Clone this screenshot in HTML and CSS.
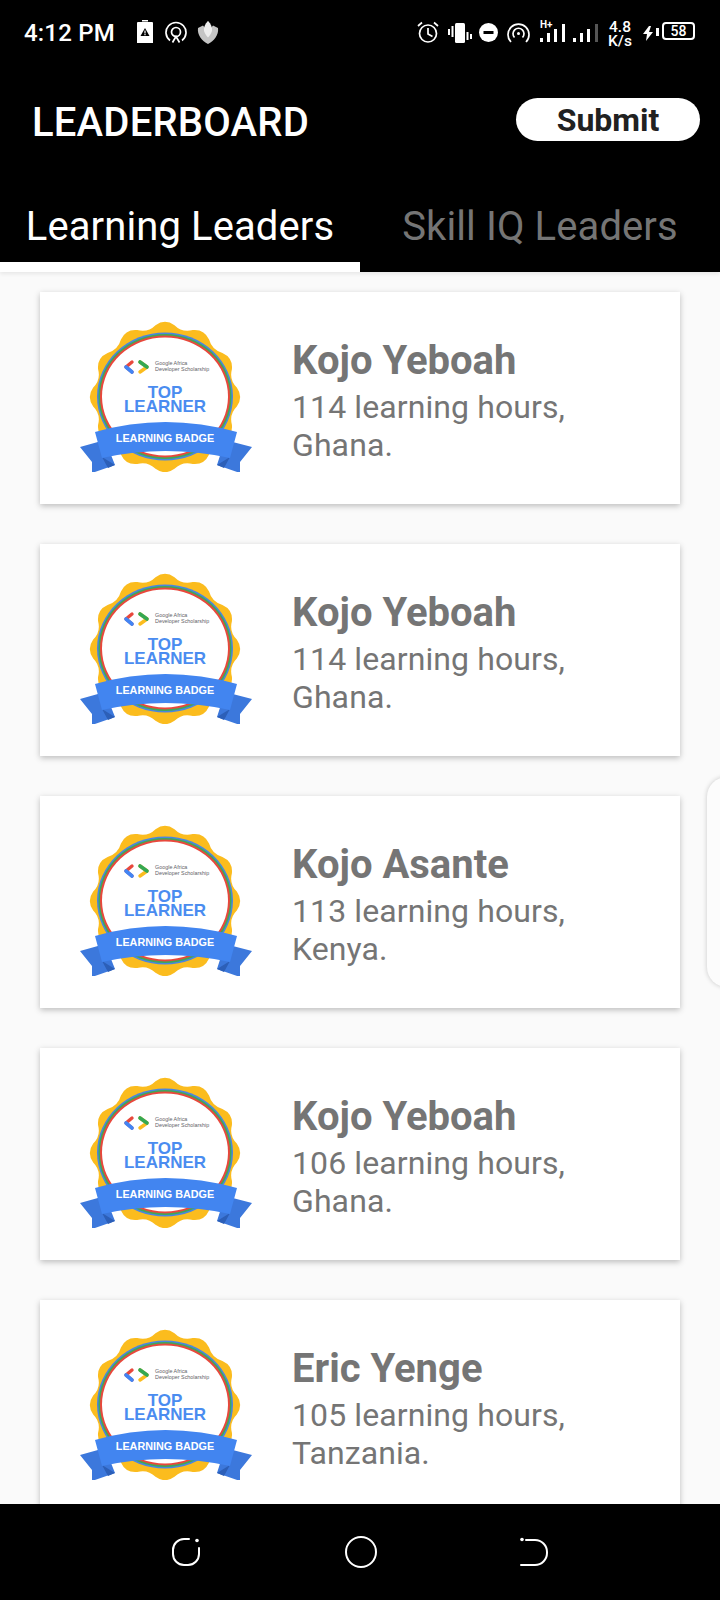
FILE: index.html
```html
<!DOCTYPE html>
<html lang="en">
<head>
    <meta charset="UTF-8">
    <title>Leaderboard</title>
    <link rel="stylesheet" href="styles.css">
</head>
<body>

<svg class="defs" width="0" height="0">
    <symbol id="badge-art" viewBox="0 0 172 152">
        <path fill="#fbbc1e" transform="translate(85 77) scale(1.02 1.02)" d="M70.4 -9.3 Q77 0 70.4 9.3 Q62.8 16.8 65.6 27.2 Q66.7 38.5 56.3 43.2 Q46 46 43.2 56.3 Q38.5 66.7 27.2 65.6 Q16.8 62.8 9.3 70.4 Q0 77 -9.3 70.4 Q-16.8 62.8 -27.2 65.6 Q-38.5 66.7 -43.2 56.3 Q-46 46 -56.3 43.2 Q-66.7 38.5 -65.6 27.2 Q-62.8 16.8 -70.4 9.3 Q-77 0 -70.4 -9.3 Q-62.8 -16.8 -65.6 -27.2 Q-66.7 -38.5 -56.3 -43.2 Q-46 -46 -43.2 -56.3 Q-38.5 -66.7 -27.2 -65.6 Q-16.8 -62.8 -9.3 -70.4 Q0 -77 9.3 -70.4 Q16.8 -62.8 27.2 -65.6 Q38.5 -66.7 43.2 -56.3 Q46 -46 56.3 -43.2 Q66.7 -38.5 65.6 -27.2 Q62.8 -16.8 70.4 -9.3 Z"/>
        <ellipse cx="85" cy="76.500" rx="68" ry="64" fill="#4a86e0"/>
        <ellipse cx="85" cy="76.500" rx="66.500" ry="62.500" fill="#3fa857"/>
        <ellipse cx="85" cy="76.500" rx="65" ry="61" fill="#e8483c"/>
        <ellipse cx="85" cy="76.500" rx="63" ry="59" fill="#fff"/>
        <path d="M52 42 L46 47 L52 52" fill="none" stroke="#e8483c" stroke-width="3.400" stroke-linecap="round" stroke-linejoin="round"/>
        <path d="M46 47 L52 52" fill="none" stroke="#4285f4" stroke-width="3.600" stroke-linecap="round"/>
        <path d="M60 42 L67 47 L60 52" fill="none" stroke="#fbbc1e" stroke-width="3.400" stroke-linecap="round" stroke-linejoin="round"/>
        <path d="M60 42 L67 47" fill="none" stroke="#34a853" stroke-width="3.600" stroke-linecap="round"/>
        <path d="M25 120 L0 127 L12 142 L12 153 L35 145 Z" fill="#3c78dc"/>
        <path d="M145 120 L172 127 L160 142 L160 153 L137 145 Z" fill="#3c78dc"/>
        <path d="M35 145 L22 137 L28 148 Z M137 145 L150 137 L144 148 Z" fill="#2c5fb8"/>
        <path d="M15 112 Q85 92 157 112 L150 138 Q85 124 22 138 Z" fill="#4285f0"/>
    </symbol>
</svg>

<div class="app">
    <div class="status">
        <span class="time">4:12 PM</span>
        <svg class="st battery-alert" width="16" height="23" viewBox="0 0 16 23">
            <path d="M5 0h6v1.500H5zM0 3a1 1 0 0 1 1-1h14a1 1 0 0 1 1 1v20H0z" fill="#fff"/>
            <path d="M8 8l4.500 8h-9z" fill="#000"/>
            <path d="M7.400 10.500h1.200v3H7.400zM7.400 14h1.200v1.200H7.400z" fill="#fff"/>
        </svg>
        <svg class="st cast" width="22" height="22" viewBox="0 0 22 22" fill="none" stroke="#fff" stroke-width="1.700">
            <path d="M5 19.500A10 10 0 1 1 17 19.500"/>
            <circle cx="11" cy="11" r="4.500"/>
            <path d="M7.500 21.500L11 15.500L14.500 21.500"/>
        </svg>
        <svg class="st lotus" width="22" height="23" viewBox="0 0 22 23">
            <path d="M1 7L6 4.500L8 7L11 0L14 7L16 4.500L21 7C22 14 17 20 11 23C5 20 0 14 1 7Z" fill="#c4c4c4"/>
            <path d="M11 0C8 3 6.500 6 7 10C8 13 9.500 15 11 16.500C12.500 15 14 13 15 10C15.500 6 14 3 11 0Z" fill="#ededed"/>
        </svg>

        <svg class="st alarm" width="22" height="22" viewBox="0 0 22 22" fill="none" stroke="#fff" stroke-width="1.700">
            <circle cx="11" cy="12.500" r="8.500"/>
            <path d="M11 7v6l4.500 2.500M1 5l4-3.500M21 5l-4-3.500"/>
        </svg>
        <svg class="st vibrate" width="24" height="20" viewBox="0 0 24 20" fill="#fff">
            <rect x="7" y="0" width="10" height="20" rx="1.500"/>
            <rect x="0" y="6" width="2" height="6"/>
            <rect x="3.500" y="3" width="2" height="11"/>
            <rect x="18.500" y="9" width="2" height="8"/>
            <rect x="22" y="11" width="2" height="5"/>
        </svg>
        <svg class="st dnd" width="19" height="19" viewBox="0 0 19 19">
            <circle cx="9.500" cy="9.500" r="9.500" fill="#fff"/>
            <rect x="4.500" y="8" width="10" height="3" fill="#000"/>
        </svg>
        <svg class="st hotspot" width="23" height="21" viewBox="0 0 23 21" fill="none" stroke="#fff" stroke-width="1.700">
            <path d="M4 20A10.500 10.500 0 1 1 19 20"/>
            <path d="M7.500 15.500A5.500 5.500 0 1 1 15.500 15.500"/>
            <circle cx="11.500" cy="11.500" r="1.500" fill="#fff" stroke="none"/>
        </svg>
        <div class="signal">
            <span class="hplus">H+</span>
            <svg width="26" height="18" viewBox="0 0 26 18" fill="#fff">
                <rect x="0" y="14" width="3" height="4"/>
                <rect x="7" y="9" width="3" height="9"/>
                <rect x="14" y="5" width="3" height="13"/>
                <rect x="22" y="0" width="3" height="18"/>
            </svg>
        </div>
        <svg class="st signal-two" width="25" height="18" viewBox="0 0 25 18">
            <rect x="0" y="14" width="3" height="4" fill="#fff"/>
            <rect x="7" y="9" width="3" height="9" fill="#fff"/>
            <rect x="14" y="5" width="3" height="13" fill="#fff"/>
            <rect x="22" y="0" width="3" height="18" fill="#555"/>
        </svg>
        <div class="speed"><span>4.8</span><span>K/s</span></div>
        <svg class="st bolt" width="16" height="15" viewBox="0 0 16 15" fill="#fff">
            <path d="M6 0L0 8h4l-1 7l7-9H6l2-6z"/>
            <rect x="13" y="2" width="3" height="8"/>
        </svg>
        <div class="battery">58</div>
    </div>

    <header class="topbar">
        <h1>LEADERBOARD</h1>
        <button class="submit">Submit</button>
    </header>

    <nav class="tabs">
        <a class="tab active" href="#">Learning Leaders</a>
        <a class="tab" href="#">Skill IQ Leaders</a>
    </nav>

    <main class="list">
        <div class="card">
            <svg class="badge" viewBox="0 0 172 152">
                <use href="#badge-art" width="172" height="152"/>
                <text class="badge-small" x="75" y="45">Google Africa</text>
                <text class="badge-small" x="75" y="51">Developer Scholarship</text>
                <text class="badge-big"><tspan x="85" y="78">TOP</tspan><tspan x="85" y="92">LEARNER</tspan></text>
                <text class="badge-ribbon" x="85" y="122">LEARNING BADGE</text>
            </svg>
            <div class="info">
                <h2>Kojo Yeboah</h2>
                <p>114 learning hours,<br>Ghana.</p>
            </div>
        </div>
        <div class="card">
            <svg class="badge" viewBox="0 0 172 152">
                <use href="#badge-art" width="172" height="152"/>
                <text class="badge-small" x="75" y="45">Google Africa</text>
                <text class="badge-small" x="75" y="51">Developer Scholarship</text>
                <text class="badge-big"><tspan x="85" y="78">TOP</tspan><tspan x="85" y="92">LEARNER</tspan></text>
                <text class="badge-ribbon" x="85" y="122">LEARNING BADGE</text>
            </svg>
            <div class="info">
                <h2>Kojo Yeboah</h2>
                <p>114 learning hours,<br>Ghana.</p>
            </div>
        </div>
        <div class="card">
            <svg class="badge" viewBox="0 0 172 152">
                <use href="#badge-art" width="172" height="152"/>
                <text class="badge-small" x="75" y="45">Google Africa</text>
                <text class="badge-small" x="75" y="51">Developer Scholarship</text>
                <text class="badge-big"><tspan x="85" y="78">TOP</tspan><tspan x="85" y="92">LEARNER</tspan></text>
                <text class="badge-ribbon" x="85" y="122">LEARNING BADGE</text>
            </svg>
            <div class="info">
                <h2>Kojo Asante</h2>
                <p>113 learning hours,<br>Kenya.</p>
            </div>
        </div>
        <div class="card">
            <svg class="badge" viewBox="0 0 172 152">
                <use href="#badge-art" width="172" height="152"/>
                <text class="badge-small" x="75" y="45">Google Africa</text>
                <text class="badge-small" x="75" y="51">Developer Scholarship</text>
                <text class="badge-big"><tspan x="85" y="78">TOP</tspan><tspan x="85" y="92">LEARNER</tspan></text>
                <text class="badge-ribbon" x="85" y="122">LEARNING BADGE</text>
            </svg>
            <div class="info">
                <h2>Kojo Yeboah</h2>
                <p>106 learning hours,<br>Ghana.</p>
            </div>
        </div>
        <div class="card">
            <svg class="badge" viewBox="0 0 172 152">
                <use href="#badge-art" width="172" height="152"/>
                <text class="badge-small" x="75" y="45">Google Africa</text>
                <text class="badge-small" x="75" y="51">Developer Scholarship</text>
                <text class="badge-big"><tspan x="85" y="78">TOP</tspan><tspan x="85" y="92">LEARNER</tspan></text>
                <text class="badge-ribbon" x="85" y="122">LEARNING BADGE</text>
            </svg>
            <div class="info">
                <h2>Eric Yenge</h2>
                <p>105 learning hours,<br>Tanzania.</p>
            </div>
        </div>
        <div class="side-panel"></div>
    </main>

    <footer class="navbar">
        <svg width="30" height="30" viewBox="0 0 30 30" fill="none" stroke="#fff" stroke-width="2" stroke-linecap="round">
            <path d="M18 2H13A11 11 0 0 0 2 13V17A11 11 0 0 0 13 28H17A11 11 0 0 0 28 17V11"/>
            <circle cx="26" cy="3.500" r="1.800" fill="#fff" stroke="none"/>
        </svg>
        <svg width="32" height="32" viewBox="0 0 32 32" fill="none" stroke="#fff" stroke-width="2">
            <circle cx="16" cy="16" r="15"/>
        </svg>
        <svg width="28" height="30" viewBox="0 0 28 30" fill="none" stroke="#fff" stroke-width="2" stroke-linecap="round">
            <path d="M6 3H15A12 12 0 0 1 27 15V16A12 12 0 0 1 15 28H1"/>
            <circle cx="2" cy="2.500" r="1.800" fill="#fff" stroke="none"/>
        </svg>
    </footer>
</div>

</body>
</html>
```

FILE: styles.css
```css
* {
    box-sizing: border-box;
}
body {
    margin: 0;
    font-family: Roboto, sans-serif;
    background: #fafafa;
}
.defs {
    position: absolute;
}
.app {
    width: 720px;
    height: 1600px;
    display: flex;
    flex-direction: column;
    overflow: hidden;
}

/* status bar */
.status {
    height: 64px;
    background: #000;
    color: #fff;
    display: flex;
    align-items: flex-start;
    padding: 20px 0 0 24px;
}
.time {
    font-size: 24px;
    font-weight: 500;
    letter-spacing: .2px;
    line-height: 26px;
    width: 113px;
}
.st {
    flex: none;
}
.cast {
    margin-left: 12px;
    margin-top: 1px;
}
.lotus {
    margin-left: 10px;
    margin-top: 1px;
}
.alarm {
    margin-left: 198px;
    margin-top: 1px;
}
.vibrate {
    margin-left: 9px;
    margin-top: 3px;
}
.dnd {
    margin-left: 7px;
    margin-top: 3px;
}
.hotspot {
    margin-left: 9px;
    margin-top: 2px;
}
.signal {
    margin-left: 10px;
    position: relative;
    margin-top: 4px;
}
.signal svg {
    display: block;
}
.hplus {
    position: absolute;
    left: 0;
    top: -5px;
    font-size: 10px;
    font-weight: 700;
}
.signal-two {
    margin-left: 7px;
    margin-top: 4px;
}
.speed {
    margin-left: 9px;
    display: flex;
    flex-direction: column;
    align-items: center;
    font-size: 15.500px;
    font-weight: 500;
    line-height: 14px;
    width: 26px;
}
.bolt {
    margin-left: 10px;
    margin-top: 6px;
}
.battery {
    margin-left: 3px;
    margin-top: 2px;
    width: 33px;
    height: 18px;
    border: 2px solid #fff;
    border-radius: 4px;
    font-size: 14px;
    font-weight: 500;
    line-height: 14px;
    text-align: center;
}

/* header */
.topbar {
    height: 104px;
    background: #000;
    display: flex;
    align-items: flex-start;
    justify-content: space-between;
    padding: 34px 20px 0 32px;
}
.topbar h1 {
    margin: 3px 0 0;
    color: #fff;
    font-size: 40px;
    font-weight: 500;
    letter-spacing: .2px;
    line-height: 44px;
}
.submit {
    width: 184px;
    height: 43px;
    border: 0;
    border-radius: 22px;
    background: #fff;
    color: #212121;
    font-family: Roboto, sans-serif;
    font-size: 32px;
    font-weight: 700;
    padding: 1px 0 0;
}

/* tabs */
.tabs {
    height: 104px;
    background: #000;
    display: flex;
    box-shadow: 0 2px 4px rgba(0, 0, 0, .08);
    position: relative;
}
.tab {
    width: 360px;
    height: 104px;
    text-align: center;
    text-decoration: none;
    color: #757575;
    font-size: 40px;
    letter-spacing: .1px;
    line-height: 48px;
    padding-top: 35px;
}
.tab.active {
    color: #fff;
    border-bottom: 10px solid #fff;
}

/* leaderboard list */
.list {
    flex: 1;
    min-height: 0;
    overflow: hidden;
    position: relative;
    padding: 20px 40px 0;
    display: flex;
    flex-direction: column;
    gap: 40px;
}
.card {
    flex: none;
    height: 212px;
    background: #fff;
    box-shadow: 0 2px 6px rgba(0, 0, 0, .25);
    display: flex;
    align-items: center;
    padding-left: 40px;
    gap: 40px;
}
.badge {
    flex: none;
    width: 172px;
    height: 152px;
    margin-bottom: 4px;
}
.badge-small {
    font-family: "Liberation Sans", sans-serif;
    font-size: 5.400px;
    fill: #5f6368;
}
.badge-big {
    font-family: "Liberation Sans", sans-serif;
    font-size: 17px;
    font-weight: 700;
    fill: #4a8cf0;
    text-anchor: middle;
}
.badge-ribbon {
    font-family: "Liberation Sans", sans-serif;
    font-size: 10.800px;
    font-weight: 700;
    fill: #fff;
    text-anchor: middle;
}
.info {
    color: #757575;
    margin-top: 2px;
}
.info h2 {
    margin: 0;
    font-size: 40px;
    font-weight: 700;
    line-height: 54px;
}
.info p {
    margin: 0;
    font-size: 32px;
    letter-spacing: .1px;
    line-height: 38px;
}
.side-panel {
    position: absolute;
    left: 707px;
    top: 505px;
    width: 40px;
    height: 210px;
    background: #fcfcfc;
    border-radius: 24px;
    box-shadow: 0 0 5px rgba(0, 0, 0, .2);
}

/* bottom nav */
.navbar {
    height: 96px;
    flex: none;
    background: #000;
    position: relative;
    display: flex;
    align-items: center;
    justify-content: space-between;
    padding: 0 172px 0 171px;
}
```
